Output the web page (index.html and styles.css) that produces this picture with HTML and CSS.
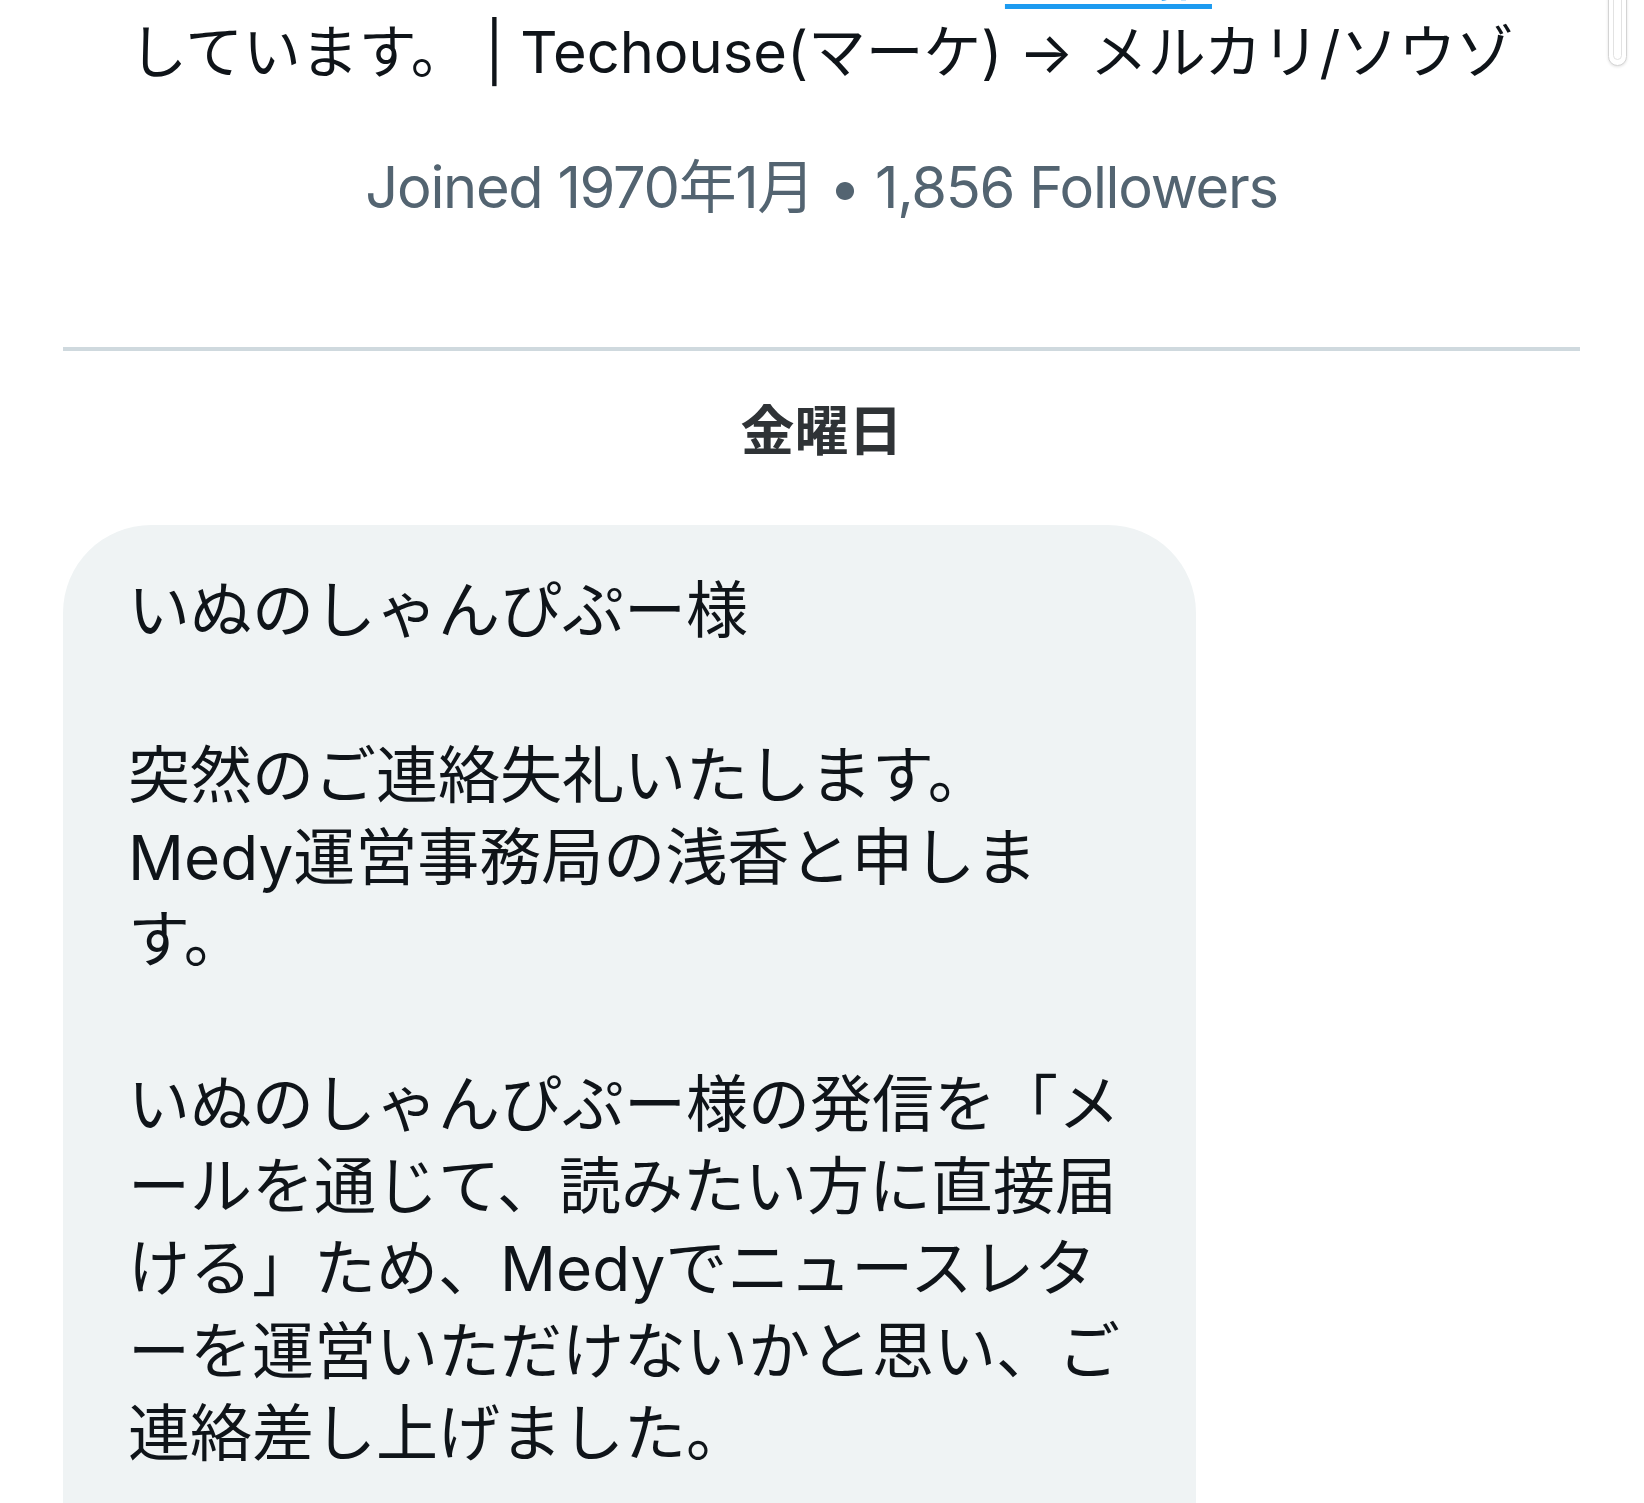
FILE: index.html
```html
<!DOCTYPE html>
<html lang="ja">
<head>
    <meta charset="UTF-8">
    <meta name="viewport" content="width=device-width, initial-scale=1.0">
    <title>メッセージ</title>
    <link rel="stylesheet" href="styles.css">
</head>
<body>
    <div class="page">
        <!-- Profil singkat di atas percakapan -->
        <section class="profile">
            <p class="bio">マーケターとして働きつつ、 <a href="#">@mktjp</a> で発信<br>しています。 | Techouse(マーケ) → メルカリ/ソウゾ</p>
            <p class="meta">Joined 1970年1月 • 1,856 Followers</p>
        </section>

        <!-- Isi percakapan -->
        <div class="conversation">
            <div class="day">金曜日</div>
            <div class="bubble">
                いぬのしゃんぴぷー様<br>
                <br>
                突然のご連絡失礼いたします。<br>
                Medy運営事務局の浅香と申しま<br>
                す。<br>
                <br>
                いぬのしゃんぴぷー様の発信を「メ<br>
                ールを通じて、読みたい方に直接届<br>
                ける」ため、Medyでニュースレタ<br>
                ーを運営いただけないかと思い、ご<br>
                連絡差し上げました。<br>
                <br>
                Medyは、書き手と読み手をつなぐ<br>
                ニュースレターサービスです。
            </div>
        </div>
    </div>

    <!-- Scrollbar tipis di kanan atas -->
    <div class="scroll-thumb"></div>
</body>
</html>
```

FILE: styles.css
```css
/* Dasar halaman */
body {
    margin: 0;
    background-color: #fff;
    font-family: Inter, "Noto Sans CJK JP", sans-serif;
    color: #0f1419;
}

/* Area yang kelihatan di layar */
.page {
    height: 1503px;
    overflow: hidden;
    padding: 0 64px 0 63px;
    display: flex;
    flex-direction: column;
}

/* Header profil */
.profile {
    margin-top: -74px;
    text-align: center;
    border-bottom: 4px solid #cfd9de;
    padding-bottom: 122px;
}

.bio {
    margin: 0;
    font-size: 57.8px;
    line-height: 84px;
}

.bio a {
    color: #1d9bf0;
    text-decoration: underline;
    text-decoration-thickness: 5px;
    text-underline-offset: 15px;
}

.meta {
    margin: 55px 0 0;
    font-size: 57.8px;
    line-height: 76px;
    letter-spacing: -1.3px;
    color: #536471;
}

/* Bagian chat */
.conversation {
    display: flex;
    flex-direction: column;
}

.day {
    margin-top: 48px;
    text-align: center;
    font-size: 54px;
    line-height: 66px;
    font-weight: bold;
    color: #2f3336;
}

.bubble {
    margin-top: 60px;
    width: 1133px;
    box-sizing: border-box;
    padding: 45px 65px;
    background-color: #eff3f4;
    border-radius: 88px 88px 88px 16px;
    font-size: 62px;
    line-height: 82.3px;
}

/* Indikator scroll */
.scroll-thumb {
    position: fixed;
    top: -30px;
    right: 17px;
    width: 17px;
    height: 94px;
    border: 1.5px solid #d4d4d4;
    border-radius: 10px;
    background-color: #fff;
    box-shadow: 0 1px 3px rgba(0, 0, 0, 0.12);
}

.scroll-thumb::after {
    content: "";
    position: absolute;
    top: 0;
    left: 4px;
    right: 4px;
    bottom: 5px;
    border: 1px solid #e2e2e2;
    border-radius: 6px;
}
```
